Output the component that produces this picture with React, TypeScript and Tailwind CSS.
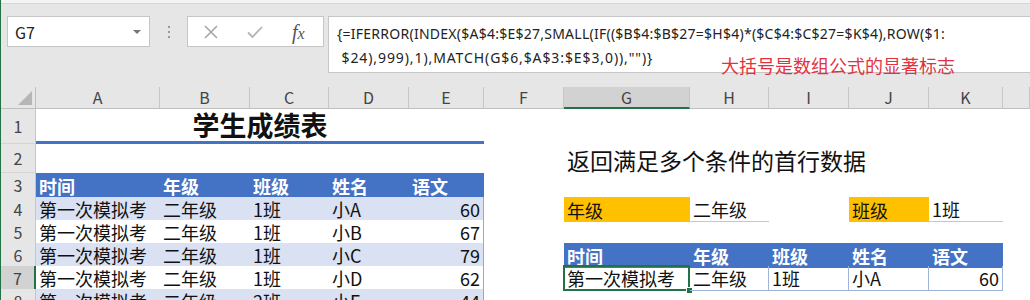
import React from 'react';

const GRID =
  'grid grid-cols-[35px_124px_90px_79px_80px_75px_80px_126px_79px_80px_80px_74px_1fr]';

const CJK = "font-['Noto_Sans_CJK_SC',sans-serif]";

function Cell({ c = '', children }: { c?: string; children?: React.ReactNode }) {
  return (
    <div
      className={
        'relative flex items-end whitespace-nowrap px-[3px] pb-[1px] text-[18px] leading-[21px] text-[#111] ' +
        c
      }
    >
      {children}
    </div>
  );
}

function RowHead({ n, active = false }: { n: number; active?: boolean }) {
  return (
    <div
      className={
        'flex items-center justify-center border-b border-[#d4d4d4] text-[16px] text-[#444] ' +
        (active
          ? 'bg-[#d2d2d2] border-r-2 border-r-[#217346]'
          : 'bg-[#e6e6e6] border-r border-r-[#c6c6c6]')
      }
    >
      {n}
    </div>
  );
}

const leftRows = [
  ['第一次模拟考', '二年级', '1班', '小A', '60'],
  ['第一次模拟考', '二年级', '1班', '小B', '67'],
  ['第一次模拟考', '二年级', '1班', '小C', '79'],
  ['第一次模拟考', '二年级', '1班', '小D', '62'],
  ['第一次模拟考', '二年级', '2班', '小E', '44'],
];

const heads = ['时间', '年级', '班级', '姓名', '语文'];
const letters = ['A', 'B', 'C', 'D', 'E', 'F', 'G', 'H', 'I', 'J', 'K', ''];

function LeftData({ row, band }: { row: string[]; band: boolean }) {
  const bg = band ? 'bg-[#d9e1f2]' : 'bg-white';
  return (
    <>
      <Cell c={bg + ' border-b border-[#b4c6e7]'}>{row[0]}</Cell>
      <Cell c={bg + ' border-b border-[#b4c6e7]'}>{row[1]}</Cell>
      <Cell c={bg + ' border-b border-[#b4c6e7]'}>{row[2]}</Cell>
      <Cell c={bg + ' border-b border-[#b4c6e7]'}>{row[3]}</Cell>
      <Cell c={bg + ' justify-end border-b border-r border-[#b4c6e7] border-r-[#8ea9db]'}>{row[4]}</Cell>
    </>
  );
}

export default function App() {
  return (
    <div className={'h-[300px] w-[1030px] overflow-hidden border-l border-[#217346] bg-white ' + CJK}>
      {/* formula bar */}
      <div className="relative h-[87px] bg-[#e6e6e6]">
        <div className="h-[4px] border-b border-[#d6d6d6] bg-[#f3f3f3]" />
        <div className="flex items-start pt-[12px]">
          <div className="ml-[6px] flex h-[31px] w-[143px] items-center justify-between border border-[#c6c6c6] bg-white pl-[7px] pr-[8px]">
            <span className="text-[16px] text-[#222]">G7</span>
            <span className="h-0 w-0 border-x-[4px] border-t-[4px] border-x-transparent border-t-[#777]" />
          </div>
          <div className="flex h-[31px] w-[37px] flex-col items-center justify-center gap-[3px]">
            <span className="h-[2px] w-[2px] bg-[#9a9a9a]" />
            <span className="h-[2px] w-[2px] bg-[#9a9a9a]" />
            <span className="h-[2px] w-[2px] bg-[#9a9a9a]" />
          </div>
          <div className="flex h-[31px] w-[137px] items-center border border-[#c6c6c6] bg-white">
            <svg width="14" height="14" viewBox="0 0 14 14" className="ml-[16px]">
              <path d="M1 1 L13 13 M13 1 L1 13" stroke="#a6a6a6" strokeWidth="1.6" />
            </svg>
            <svg width="16" height="14" viewBox="0 0 16 14" className="ml-[29px]">
              <path d="M1 7.5 L5.5 12 L15 2" stroke="#b4b4b4" strokeWidth="1.8" fill="none" />
            </svg>
            <span className="ml-[29px] font-['Liberation_Serif',serif] text-[20px] italic text-[#555]">
              f<span className="text-[16px]">x</span>
            </span>
          </div>
          <div className="relative ml-[4px] h-[57px] flex-1 border border-r-0 border-[#c6c6c6] bg-white pl-[8px] pt-[5px] font-['Noto_Sans',sans-serif] text-[14px] leading-[24px] text-[#222]">
            <div className="whitespace-nowrap tracking-[0.25px]">
              {'{=IFERROR(INDEX($A$4:$E$27,SMALL(IF(($B$4:$B$27=$H$4)*($C$4:$C$27=$K$4),ROW($1:'}
            </div>
            <div className="whitespace-pre tracking-[0.9px]">{' $24),999),1),MATCH(G$6,$A$3:$E$3,0)),"")}'}</div>
            <div className={'absolute left-[392px] top-[37px] whitespace-nowrap text-[18px] leading-[22px] text-[#e2323f] ' + CJK}>
              大括号是数组公式的显著标志
            </div>
          </div>
        </div>
      </div>

      {/* column headers */}
      <div className={GRID + ' h-[22px] bg-[#e6e6e6] text-[16px] leading-[20px] text-[#444]'}>
        <div className="relative border-b border-r border-[#bfbfbf]">
          <span className="absolute bottom-[3px] right-[3px] h-0 w-0 border-b-[14px] border-l-[14px] border-b-[#b6b6b6] border-l-transparent" />
        </div>
        {letters.map((l, i) => (
          <div
            key={i}
            className={
              'flex justify-center border-r border-[#c6c6c6] ' +
              (l === 'G' ? 'border-b-2 border-b-[#217346] bg-[#d2d2d2]' : 'border-b border-b-[#bfbfbf]')
            }
          >
            {l}
          </div>
        ))}
      </div>

      {/* row 1 */}
      <div className={GRID + ' h-[35px]'}>
        <RowHead n={1} />
        <div className="col-span-5 flex items-end justify-center border-b-[3px] border-[#4472c4] pb-[1px] text-[27px] font-bold leading-[30px] text-[#111]">
          学生成绩表
        </div>
      </div>

      {/* row 2 */}
      <div className={GRID + ' h-[29px]'}>
        <RowHead n={2} />
        <div className="col-span-6" />
        <div className="col-span-5 flex items-end whitespace-nowrap px-[3px] text-[23px] leading-[26px] text-[#111]">
          返回满足多个条件的首行数据
        </div>
      </div>

      {/* row 3 */}
      <div className={GRID + ' h-[24px]'}>
        <RowHead n={3} />
        {heads.map((h) => (
          <Cell key={h} c="bg-[#4472c4] font-bold text-white">
            {h}
          </Cell>
        ))}
      </div>

      {/* row 4 */}
      <div className={GRID + ' h-[23px]'}>
        <RowHead n={4} />
        <LeftData row={leftRows[0]} band />
        <Cell />
        <Cell c="bg-[#ffc000]">年级</Cell>
        <Cell c="border-b border-[#f2c94c]">二年级</Cell>
        <Cell />
        <Cell c="bg-[#ffc000]">班级</Cell>
        <Cell c="border-b border-[#f2c94c]">1班</Cell>
      </div>

      {/* row 5 */}
      <div className={GRID + ' h-[23px]'}>
        <RowHead n={5} />
        <LeftData row={leftRows[1]} band={false} />
      </div>

      {/* row 6 */}
      <div className={GRID + ' h-[23px]'}>
        <RowHead n={6} />
        <LeftData row={leftRows[2]} band />
        <Cell />
        {heads.map((h) => (
          <Cell key={h} c="bg-[#4472c4] font-bold text-white">
            {h}
          </Cell>
        ))}
      </div>

      {/* row 7 */}
      <div className={GRID + ' h-[23px]'}>
        <RowHead n={7} active />
        <LeftData row={leftRows[3]} band={false} />
        <Cell />
        <Cell c="border-b border-r border-[#9fb3d9]">
          第一次模拟考
          <span className="absolute -left-[1px] -top-[1px] -bottom-[1px] -right-[1px] border-2 border-[#217346]" />
          <span className="absolute -bottom-[4px] -right-[4px] h-[7px] w-[7px] border border-white bg-[#217346]" />
        </Cell>
        <Cell c="border-b border-r border-[#9fb3d9]">二年级</Cell>
        <Cell c="border-b border-r border-[#9fb3d9]">1班</Cell>
        <Cell c="border-b border-r border-[#9fb3d9]">小A</Cell>
        <Cell c="justify-end border-b border-r border-[#9fb3d9]">60</Cell>
      </div>

      {/* row 8 */}
      <div className={GRID + ' h-[23px]'}>
        <RowHead n={8} />
        <LeftData row={leftRows[4]} band />
      </div>
    </div>
  );
}
